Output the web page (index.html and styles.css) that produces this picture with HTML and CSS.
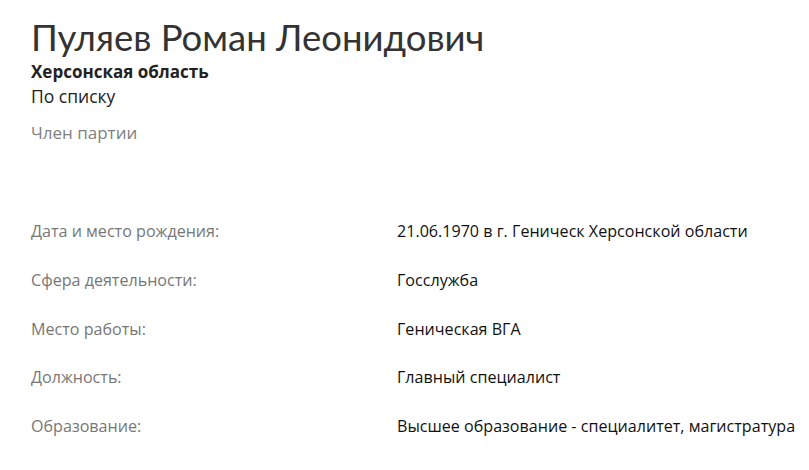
FILE: index.html
```html
<!DOCTYPE html>
<html lang="ru">
<head>
<meta charset="utf-8">
<link rel="stylesheet" href="styles.css">
</head>
<body>
<div class="page">
  <h1 class="name">Пуляев Роман Леонидович</h1>
  <div class="region">Херсонская область</div>
  <div class="list">По списку</div>
  <div class="party">Член партии</div>
  <dl class="info">
    <div class="row"><dt>Дата и место рождения:</dt><dd>21.06.1970 в г. Геническ Херсонской области</dd></div>
    <div class="row"><dt>Сфера деятельности:</dt><dd>Госслужба</dd></div>
    <div class="row"><dt>Место работы:</dt><dd>Геническая ВГА</dd></div>
    <div class="row"><dt>Должность:</dt><dd>Главный специалист</dd></div>
    <div class="row"><dt>Образование:</dt><dd>Высшее образование - специалитет, магистратура</dd></div>
  </dl>
</div>
</body>
</html>
```
FILE: styles.css
```css
html, body { margin: 0; padding: 0; background: #fff; }
body { font-family: "Open Sans", Lato, sans-serif; color: #222; }
.page { padding: 14px 0 0 31px; }
.name { margin: 0; font-family: Lato, sans-serif; font-size: 36.5px; font-weight: 400; line-height: 46px; color: #333; }
.region { font-weight: 700; font-size: 17px; line-height: 24px; color: #222; }
.list { font-size: 17.5px; line-height: 25px; color: #222; }
.party { font-size: 17px; line-height: 24px; color: #808080; margin-top: 12px; }
.info { margin: 74px 0 0; }
.row { display: grid; grid-template-columns: 366px 1fr; height: 48.8px; }
dt { color: #777; font-size: 16.1px; line-height: 24px; }
dd { margin: 0; color: #111; font-size: 16.1px; line-height: 24px; }
```
